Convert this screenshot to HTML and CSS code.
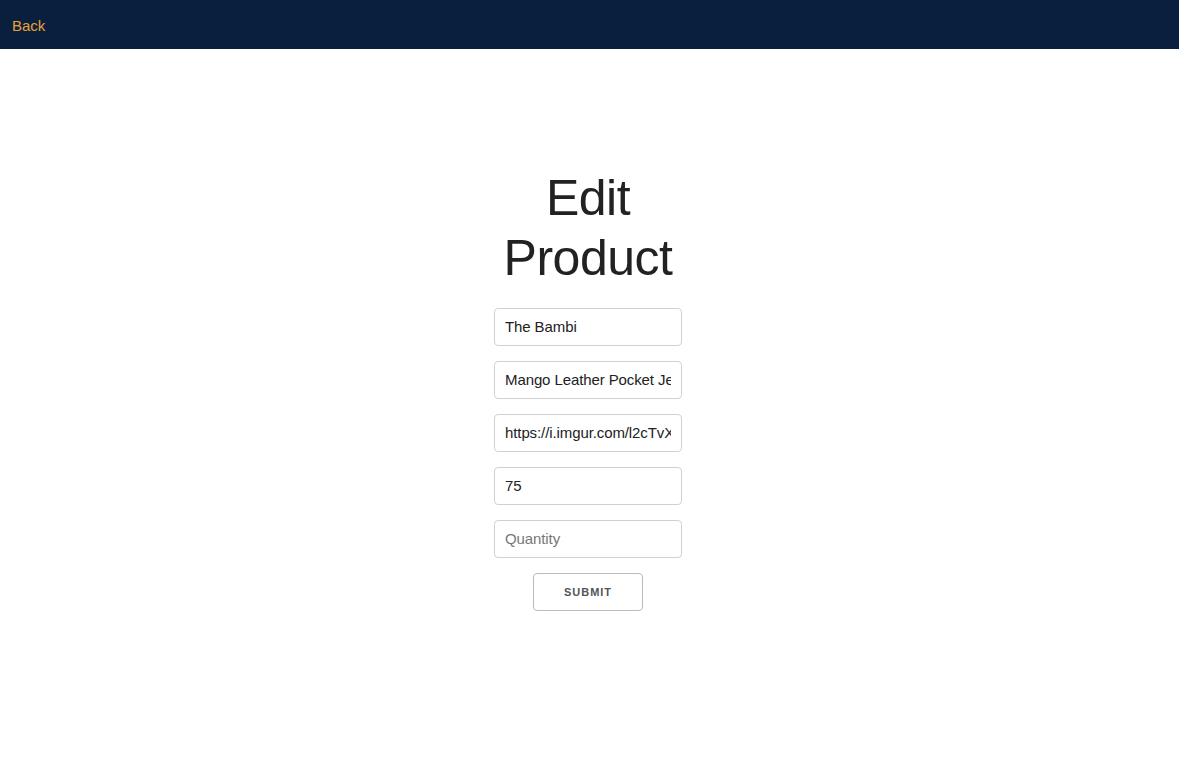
FILE: index.html
```html
<!DOCTYPE html>
<html>
<head>
<meta charset="utf-8">
<title>Edit Product</title>
<link rel="stylesheet" href="styles.css">
</head>
<body>
<header class="topbar">
  <a class="back-link" href="#">Back</a>
</header>
<main class="page">
  <div class="edit-box">
    <h1 class="title">Edit Product</h1>
    <form class="edit-form">
      <input class="field" type="text" value="The Bambi">
      <input class="field" type="text" value="Mango Leather Pocket Jeans">
      <input class="field" type="text" value="https://i.imgur.com/l2cTvXz.jpg">
      <input class="field" type="text" value="75">
      <input class="field" type="text" placeholder="Quantity">
      <button class="submit-btn" type="button">Submit</button>
    </form>
  </div>
</main>
</body>
</html>
```

FILE: styles.css
```css
html, body {
  margin: 0;
  padding: 0;
  background: #fff;
}
body {
  font-family: "Liberation Sans", Arial, sans-serif;
  color: #222;
}
.topbar {
  height: 49px;
  background: #0a1f3d;
  display: flex;
  align-items: center;
  padding: 0 12px;
}
.back-link {
  color: #e9a23b;
  text-decoration: none;
  font-size: 15px;
  line-height: 1;
  margin-top: 1px;
}
.page {
  display: flex;
  justify-content: center;
  padding-top: 119px;
}
.edit-box {
  width: 188px;
  display: flex;
  flex-direction: column;
  align-items: center;
  margin-left: -3px;
}
.title {
  margin: 0 0 20px;
  font-size: 50px;
  line-height: 60px;
  font-weight: 400;
  letter-spacing: -0.5px;
  text-align: center;
  color: #222;
}
.edit-form {
  display: flex;
  flex-direction: column;
  align-items: center;
  gap: 15px;
  width: 100%;
}
.field {
  box-sizing: border-box;
  width: 188px;
  height: 38px;
  padding: 5px 10px 7px;
  border: 1px solid #d1d1d1;
  border-radius: 4px;
  font-family: "Liberation Sans", Arial, sans-serif;
  font-size: 15px;
  letter-spacing: -0.1px;
  color: #222;
  background: #fff;
  outline: none;
}
.field::placeholder {
  color: #777;
}
.submit-btn {
  box-sizing: border-box;
  width: 110px;
  height: 38px;
  padding: 0;
  border: 1px solid #bbb;
  border-radius: 4px;
  background: transparent;
  font-family: "Liberation Sans", Arial, sans-serif;
  font-size: 11px;
  font-weight: 700;
  letter-spacing: 1px;
  text-transform: uppercase;
  color: #555;
  cursor: pointer;
}
```
